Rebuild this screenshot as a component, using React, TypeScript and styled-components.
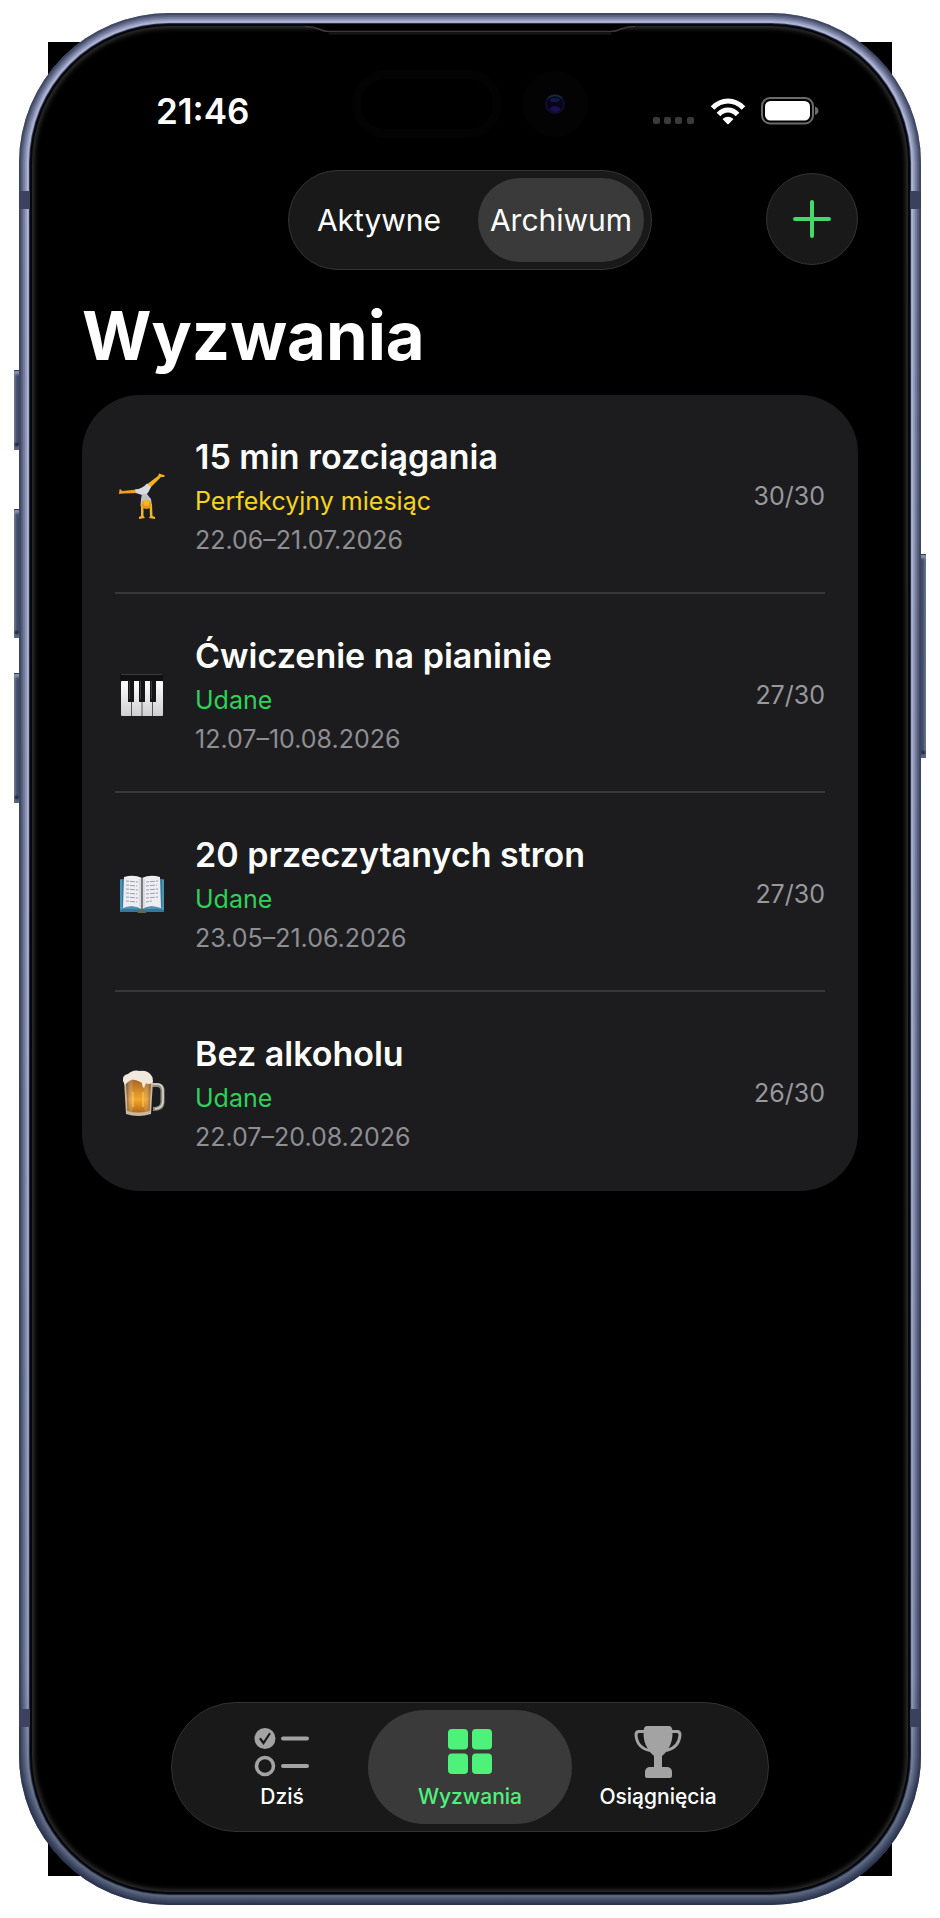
import React, { useState } from "react";
import styled, { createGlobalStyle } from "styled-components";

const GlobalStyle = createGlobalStyle`
  * { box-sizing: border-box; }
  body { margin: 0; background: #fff; }
  button { font: inherit; color: inherit; border: 0; margin: 0; cursor: pointer; }
`;

const Page = styled.div`
  min-height: 100vh;
  display: flex;
  padding: 13px 19px;
  font-family: Inter, "Noto Sans", sans-serif;
  color: #fff;
`;

const Device = styled.div`
  position: relative;
  flex: 1;
  display: flex;
  min-width: 0;
`;

const Backdrop = styled.div`
  position: absolute;
  inset: 29px;
  background: #000;
`;

const Frame = styled.div`
  position: relative;
  flex: 1;
  display: flex;
  min-width: 0;
  padding: 11px;
  border-radius: 150px;
  background: linear-gradient(#b4bbdd, #a9b1d0 50%, #959fbe 88%, #66718b 95%, #5d687f);
  box-shadow:
    inset 0 0 1px 2px rgba(28, 37, 64, 0.45),
    inset 0 0 1px 4px rgba(28, 37, 64, 0.3),
    inset 0 0 1px 6px rgba(28, 37, 64, 0.25),
    inset 0 0 1px 8px rgba(28, 37, 64, 0.2);
`;

const Glass = styled.div`
  flex: 1;
  display: flex;
  min-width: 0;
  padding: 2px;
  border-radius: 139px;
  background: #05070d;
  box-shadow: 0 0 1px 1px #1c2338;
`;

const Screen = styled.div`
  position: relative;
  flex: 1;
  min-width: 0;
  display: flex;
  flex-direction: column;
  padding: 0 50px;
  border-radius: 137px;
  background: #000;
  box-shadow: inset 0 0 5px 2px #343634;
`;

const SideKey = styled.span<{ $side: "left" | "right"; $top: number; $length: number }>`
  position: absolute;
  ${(p) => p.$side}: -5px;
  top: ${(p) => p.$top}px;
  width: 6px;
  height: ${(p) => p.$length}px;
  border-radius: 1px;
  background: linear-gradient(
    ${(p) => (p.$side === "left" ? "90deg" : "270deg")},
    #8791ab 0, #4a5876 2px, #26324c 6px
  );
  box-shadow: inset 0 1px 1px #2a3349, inset 0 4px 3px #909ab6, inset 0 -4px 2px #56617b, inset 0 -7px 2px #1c2436;
`;

const Band = styled.span<{ $side: "left" | "right"; $edge: "top" | "bottom" }>`
  position: absolute;
  ${(p) => p.$side}: 0;
  ${(p) => p.$edge}: 178px;
  width: 11px;
  height: 18px;
  background: ${(p) => (p.$side === "left" ? "#3f425e" : "#38435b")};
`;

const Lip = styled.svg`
  position: absolute;
  top: -2px;
  left: 50%;
  width: 330px;
  height: 14px;
  transform: translateX(-50%);
`;

const Island = styled.div`
  position: absolute;
  top: 44px;
  left: 0;
  right: 0;
  display: flex;
  justify-content: center;
  gap: 20px;
`;

const Sensor = styled.span`
  width: 150px;
  height: 68px;
  border: 9px solid #030303;
  border-radius: 34px;
`;

const Camera = styled.svg`
  width: 66px;
  height: 68px;
`;

const StatusBar = styled.div`
  display: flex;
  align-items: center;
  justify-content: space-between;
  padding: 69px 39px 43px 74px;
`;

const Clock = styled.time`
  font-size: 35px;
  line-height: 32px;
  font-weight: 600;
`;

const StatusIcons = styled.div`
  display: flex;
  align-items: center;
  gap: 15px;
`;

const Header = styled.header`
  display: grid;
  grid-template-columns: 1fr auto 1fr;
  align-items: center;
`;

const Segments = styled.div`
  grid-column: 2;
  display: flex;
  height: 100px;
  padding: 7px;
  border: 1px solid #343434;
  border-radius: 50px;
  background: #191919;
`;

const Segment = styled.button<{ $active: boolean }>`
  flex: none;
  padding: 0 11px;
  border-radius: 42px;
  font-size: 30px;
  line-height: 36px;
  background: ${(p) => (p.$active ? "#3a3a3a" : "transparent")};
  &:first-child { width: 182px; padding: 0 27px 0 11px; }
  &:last-child { width: 166px; }
`;

const AddButton = styled.button`
  justify-self: end;
  display: grid;
  place-items: center;
  width: 92px;
  height: 92px;
  padding: 0;
  && { border: 1px solid #333; margin-bottom: 2px; }
  border-radius: 50%;
  background: #191919;
`;

const Title = styled.h1`
  margin: 26px 0 19px;
  font-size: 67px;
  line-height: 80px;
  font-weight: 700;
`;

const List = styled.ul`
  list-style: none;
  margin: 0;
  padding: 0 33px;
  border-radius: 58px;
  background: #1c1c1e;
`;

const Row = styled.li`
  display: flex;
  align-items: center;
  padding: 38px 0 32px;
  border-bottom: 2px solid #38383a;
  &:last-child { border-color: transparent; }
`;

const Emoji = styled.svg`
  flex: none;
  width: 52px;
  height: 52px;
  margin-right: 28px;
`;

const Info = styled.div`
  flex: 1;
  min-width: 0;
`;

const Name = styled.h2`
  margin: 0 0 1px;
  font-size: 34px;
  line-height: 48px;
  font-weight: 600;
`;

const Detail = styled.p<{ $color: string }>`
  margin: 0;
  font-size: 25px;
  line-height: 39px;
  color: ${(p) => p.$color};
`;

const Count = styled.span`
  font-size: 25px;
  line-height: 39px;
  color: #98989d;
`;

const TabBar = styled.nav`
  align-self: center;
  display: flex;
  justify-content: center;
  width: 598px;
  height: 130px;
  margin: auto 0 60px;
  padding: 7px;
  border: 1px solid #323232;
  border-radius: 66px;
  background: #191919;
`;

const Tab = styled.a<{ $active: boolean }>`
  flex: none;
  width: ${(p) => (p.$active ? 204 : 188)}px;
  margin: 0 ${(p) => (p.$active ? -8 : 0)}px;
  display: flex;
  flex-direction: column;
  align-items: center;
  padding-top: 16px;
  border-radius: 58px;
  font-size: 21px;
  line-height: 28px;
  font-weight: 500;
  text-decoration: none;
  color: ${(p) => (p.$active ? "#4ef27a" : "#fff")};
  background: ${(p) => (p.$active ? "#3a3a3a" : "transparent")};
  svg { flex: none; margin-bottom: 5px; }
`;

const Cartwheel = () => (
  <Emoji viewBox="0 0 52 52" aria-hidden="true">
    <path d="M4 23 L4.500 18.500 Q6 17.500 7 20 L22 18.500 L24 22 L8 22.500 Z" fill="#e9a41c" />
    <path d="M31 14 L43 5 L44 2.500 L50 4.500 L49 6 L46 6 L35 17 Z" fill="#f5b01c" />
    <path d="M20 18.500 Q27 18 32 12.500 L36 16 Q34 21 31 24 L27 24 L21 22Z" fill="#d9dae0" />
    <path d="M27 23 H32 L36 28 L37 35 L34.500 37 H28 L25.500 35 L26 28Z" fill="#bfc2cc" />
    <path d="M26 33 L28.500 33 L28.500 45 L30 47 L24 48 L24 46 L26 45 Z M34.500 33 L37 33 L37.500 45 L40 46 L40 48 L34 47 L35 45 Z" fill="#f4b522" />
    <circle cx="31.500" cy="33.500" r="4.500" fill="#e8930f" />
    <circle cx="31.500" cy="32" r="3" fill="#fbb52b" />
  </Emoji>
);

const Piano = () => (
  <Emoji viewBox="0 0 52 52" aria-hidden="true">
    <defs>
      <linearGradient id="keys" x2="0" y2="1">
        <stop offset="0" stopColor="#fff" />
        <stop offset="1" stopColor="#cfcfd2" />
      </linearGradient>
    </defs>
    <rect x="5" y="4" width="43" height="7" rx="1" fill="#101012" />
    <path d="M6 4.500 H47" stroke="#3a3a3d" />
    <rect x="6" y="11" width="42" height="35" rx="1" fill="url(#keys)" />
    <path d="M16.500 11 V46 M27 11 V46 M37.500 11 V46" stroke="#55555a" />
    <path d="M13 10 h6 v22 h-6z M24 10 h6 v22 h-6z M35 10 h6 v22 h-6z" fill="#151517" />
    <path d="M14.500 11 v18 M25.500 11 v18 M36.500 11 v18" stroke="#3b3b40" />
  </Emoji>
);

const Book = () => (
  <Emoji viewBox="0 0 52 52" aria-hidden="true">
    <path d="M5 10 H49 V43 H31 L27 44 L23 43 H5 Z" fill="#34789b" />
    <path d="M6 39 H48 M6 11 V41 M48 11 V41" stroke="#65abc9" />
    <path d="M8 39 L9 8 Q19 5 27 9 Q35 5 45 8 L46 39 Q34 35 27 40 Q18 35 8 39Z" fill="#eeeef2" />
    <path d="M27 9 V40" stroke="#777983" strokeWidth="2" />
    <path d="M25 10 V38 M29 10 V38" stroke="#c4c6cf" />
    <path
      d="M11 12 L23 13 M11 16 L22 17 M11 20 L23 21 M11 24 L22 25 M11 28 L23 29 M11 32 L22 33 M31 13 L43 12 M31 17 L42 16 M31 21 L43 20 M31 25 L43 24 M31 29 L43 28 M31 33 L37 32"
      stroke="#9c9eaa"
      strokeDasharray="3 1 5 1"
    />
    <path d="M22 42 Q27 39 32 42 L31 44 H23Z" fill="#6a6647" />
  </Emoji>
);

const Beer = () => (
  <Emoji viewBox="0 0 52 52" aria-hidden="true">
    <defs>
      <linearGradient id="ale" x2="0" y2="1">
        <stop offset="0" stopColor="#a96525" />
        <stop offset=".6" stopColor="#f2a82c" />
        <stop offset="1" stopColor="#b66a16" />
      </linearGradient>
      <linearGradient id="side">
        <stop offset="0" stopColor="#6d3511" stopOpacity=".8" />
        <stop offset=".3" stopColor="#fff" stopOpacity="0" />
        <stop offset=".7" stopColor="#fff" stopOpacity="0" />
        <stop offset="1" stopColor="#7b3b10" stopOpacity=".7" />
      </linearGradient>
    </defs>
    <path d="M36 17 H42 Q47.500 17 47.500 23 V34 Q47.500 41 38 41" fill="none" stroke="#8f8b83" strokeWidth="4" />
    <path d="M37 16 H42 Q48 16 48 23 V33 Q48 40 40 41" fill="none" stroke="#ddd8cc" strokeWidth="1.500" />
    <path d="M9 12 L11 46 Q23 50 36 46 L38 12Z" fill="#c7baa3" />
    <path d="M11 12 L12.500 43 Q23 46 34.500 43 L36 12Z" fill="url(#ale)" />
    <path d="M11 12 L12.500 43 Q23 46 34.500 43 L36 12Z" fill="url(#side)" />
    <path d="M18 24 V39 M28 24 V39" stroke="#ffd159" strokeWidth="2" opacity=".5" />
    <path d="M8 13 Q7 7 13 6 Q18 1 25 3 Q32 2 36 7 Q39 10 37 15 Q34 17 31 15 L29 20 Q27 19 27 15 Q20 11 16 12 Q12 14 10 17Z" fill="#f1e9dd" />
  </Emoji>
);

const WifiIcon = () => (
  <svg width="36" height="27" viewBox="0 0 36 27" role="img" aria-label="Wi-Fi">
    <g fill="none" stroke="#fff" strokeWidth="5">
      <path d="M2.500 10 Q9.500 3 18 3 Q26.500 3 33.500 10" />
      <path d="M8.500 16.500 Q12.500 12 18 12 Q23.500 12 27.500 16.500" />
    </g>
    <path d="M12.500 21 Q18 16.500 23.500 21 L18.700 26 Q18 26.600 17.300 26Z" fill="#fff" />
  </svg>
);

const BatteryIcon = () => (
  <svg width="58" height="28" viewBox="0 0 58 28" role="img" aria-label="Bateria">
    <rect x="1" y="1" width="51" height="25.500" rx="8" fill="none" stroke="#6b6b6b" strokeWidth="2" />
    <rect x="4" y="4" width="45" height="19.500" rx="5.500" fill="#fff" />
    <path d="M54 9.500 Q57.500 11 57.500 13.700 Q57.500 16.500 54 18Z" fill="#6b6b6b" />
  </svg>
);

const SignalIcon = () => (
  <svg width="42" height="27" viewBox="0 0 42 27" role="img" aria-label="Brak zasięgu">
    {[0, 11, 22, 34].map((x) => (
      <rect key={x} x={x} y="19" width="7" height="7" rx="2" fill="#3a3a3a" />
    ))}
  </svg>
);

const TasksIcon = () => (
  <svg width="56" height="52" viewBox="0 0 56 52" aria-hidden="true">
    <circle cx="11" cy="12.500" r="10.500" fill="#a3a3a3" />
    <path d="M6.500 13 L9.500 17 L15.500 8" fill="none" stroke="#191919" strokeWidth="2.200" strokeLinecap="round" />
    <circle cx="11" cy="40" r="8.500" fill="none" stroke="#a3a3a3" strokeWidth="3.600" />
    <path d="M29 12.500 H53 M29 40 H53" stroke="#a3a3a3" strokeWidth="4" strokeLinecap="round" />
  </svg>
);

const GridIcon = () => (
  <svg width="46" height="52" viewBox="0 0 46 52" aria-hidden="true">
    <g fill="#4ef27a">
      <rect x="1" y="3" width="20" height="20.500" rx="4" />
      <rect x="25" y="3" width="20" height="20.500" rx="4" />
      <rect x="1" y="27.500" width="20" height="20.500" rx="4" />
      <rect x="25" y="27.500" width="20" height="20.500" rx="4" />
    </g>
  </svg>
);

const TrophyIcon = () => (
  <svg width="48" height="52" viewBox="0 0 48 52" aria-hidden="true">
    <path
      d="M13 0 H35 Q38 0 38.500 5 Q39 16 34 23 Q31 28 28 30 V41 H34 Q38 42 38 46 V50 Q38 52 36 52 H13 Q11 52 11 50 V46 Q11 42 15 41 H20 V30 Q17 28 14 23 Q9 16 9.500 5 Q10 0 13 0Z"
      fill="#a3a3a3"
    />
    <path d="M11 5.500 H5 Q2 5.500 2 9 Q3 22 16 24.500 M37 5.500 H43 Q46 5.500 46 9 Q45 22 32 24.500" fill="none" stroke="#a3a3a3" strokeWidth="3" />
  </svg>
);

const challenges = [
  { icon: <Cartwheel />, name: "15 min rozciągania", status: "Perfekcyjny miesiąc", color: "#f5d51c", dates: "22.06–21.07.2026", count: "30/30" },
  { icon: <Piano />, name: "Ćwiczenie na pianinie", status: "Udane", color: "#30d158", dates: "12.07–10.08.2026", count: "27/30" },
  { icon: <Book />, name: "20 przeczytanych stron", status: "Udane", color: "#30d158", dates: "23.05–21.06.2026", count: "27/30" },
  { icon: <Beer />, name: "Bez alkoholu", status: "Udane", color: "#30d158", dates: "22.07–20.08.2026", count: "26/30" },
];

const tabs = [
  { label: "Dziś", icon: <TasksIcon /> },
  { label: "Wyzwania", icon: <GridIcon /> },
  { label: "Osiągnięcia", icon: <TrophyIcon /> },
];

export default function App() {
  const [segment, setSegment] = useState("Archiwum");

  return (
    <Page>
      <GlobalStyle />
      <Device>
        <Backdrop />
        <SideKey $side="left" $top={357} $length={80} />
        <SideKey $side="left" $top={496} $length={129} />
        <SideKey $side="left" $top={660} $length={130} />
        <SideKey $side="right" $top={541} $length={204} />
        <Frame>
          <Band $side="left" $edge="top" />
          <Band $side="right" $edge="top" />
          <Band $side="left" $edge="bottom" />
          <Band $side="right" $edge="bottom" />
          <Glass>
            <Screen>
              <Lip viewBox="0 0 330 14" aria-hidden="true">
                <path d="M0 0 H330 V2 Q322 2 314 5 Q311 7 306 7 H24 Q19 7 16 5 Q8 2 0 2Z" fill="#000" />
                <path d="M14 8 Q18 9.500 24 9.500 H306 Q312 9.500 316 8" stroke="#000" strokeWidth="5" fill="none" />
                <path d="M0 2.500 Q8 2.500 14 5 Q19 7.500 24 7.500 H306 Q311 7.500 316 5 Q322 2.500 330 2.500" fill="none" stroke="#3a3a38" strokeWidth="1.500" />
                <path d="M24 9.500 H306" stroke="#171717" strokeWidth="2" />
              </Lip>
              <Island aria-hidden="true">
                <Sensor />
                <Camera viewBox="0 0 66 68">
                  <circle cx="33" cy="34" r="33" fill="#030303" />
                  <circle cx="33" cy="34" r="9" fill="#070617" stroke="#120d30" strokeWidth="2" />
                  <path d="M26 28 Q33 23 40 28" fill="none" stroke="#0d2b33" strokeWidth="2" />
                  <ellipse cx="33" cy="30" rx="5" ry="2" fill="#16164a" />
                  <ellipse cx="33" cy="39" rx="5" ry="3" fill="#1d0f52" />
                </Camera>
              </Island>
              <StatusBar>
                <Clock>21:46</Clock>
                <StatusIcons>
                  <SignalIcon />
                  <WifiIcon />
                  <BatteryIcon />
                </StatusIcons>
              </StatusBar>
              <Header>
                <Segments role="group" aria-label="Widok wyzwań">
                  {["Aktywne", "Archiwum"].map((s) => (
                    <Segment key={s} $active={s === segment} aria-pressed={s === segment} onClick={() => setSegment(s)}>
                      {s}
                    </Segment>
                  ))}
                </Segments>
                <AddButton aria-label="Dodaj wyzwanie">
                  <svg width="38" height="38" viewBox="0 0 38 38" aria-hidden="true">
                    <path d="M19 2 V36 M2 19 H36" stroke="#45d96b" strokeWidth="4" strokeLinecap="round" />
                  </svg>
                </AddButton>
              </Header>
              <Title>Wyzwania</Title>
              <List>
                {challenges.map((c) => (
                  <Row key={c.name}>
                    {c.icon}
                    <Info>
                      <Name>{c.name}</Name>
                      <Detail $color={c.color}>{c.status}</Detail>
                      <Detail $color="#8e8e93">{c.dates}</Detail>
                    </Info>
                    <Count>{c.count}</Count>
                  </Row>
                ))}
              </List>
              <TabBar>
                {tabs.map((t) => (
                  <Tab key={t.label} href="#" $active={t.label === "Wyzwania"} aria-current={t.label === "Wyzwania" ? "page" : undefined}>
                    {t.icon}
                    {t.label}
                  </Tab>
                ))}
              </TabBar>
            </Screen>
          </Glass>
        </Frame>
      </Device>
    </Page>
  );
}
